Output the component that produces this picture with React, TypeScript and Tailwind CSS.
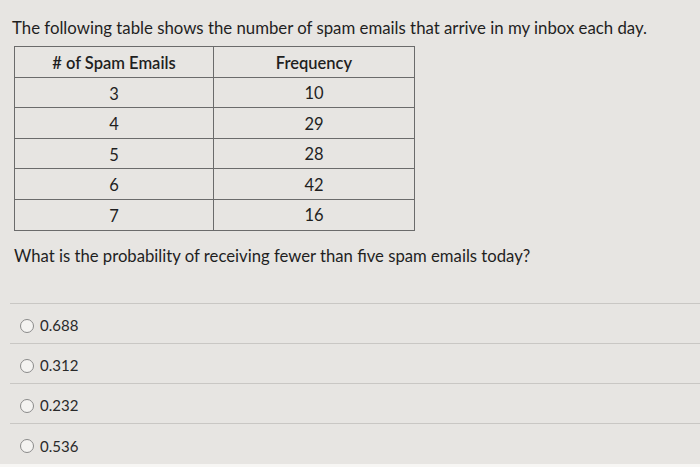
import React from 'react'

const rows = [
  { n: 3, f: 10 },
  { n: 4, f: 29 },
  { n: 5, f: 28 },
  { n: 6, f: 42 },
  { n: 7, f: 16 },
]

const options = ['0.688', '0.312', '0.232', '0.536']

export default function App() {
  return (
    <div
      className="flex h-[467px] w-[700px] flex-col overflow-hidden bg-[#e7e5e2] text-[#1f1f1f]"
      style={{ fontFamily: 'Lato, "Noto Sans", sans-serif' }}
    >
      <p className="pl-[12px] pt-[17px] text-[16.8px] leading-[22px]">
        The following table shows the number of spam emails that arrive in my inbox each day.
      </p>

      <table className="ml-[14px] mt-[7px] w-[401px] border-collapse text-center text-[16.5px]">
        <thead>
          <tr className="h-[30.6px]">
            <th className="w-[199px] border border-[#6b6b6b] pt-[4px] font-semibold">
              # of Spam Emails
            </th>
            <th className="border border-[#6b6b6b] pt-[3px] font-semibold">Frequency</th>
          </tr>
        </thead>
        <tbody>
          {rows.map(r => (
            <tr key={r.n} className="h-[30.6px]">
              <td className="border border-[#6b6b6b] pt-[3px]">{r.n}</td>
              <td className="border border-[#6b6b6b] pt-[2px]">{r.f}</td>
            </tr>
          ))}
        </tbody>
      </table>

      <p className="pl-[14px] pt-[14px] text-[16.7px] leading-[22px]">
        What is the probability of receiving fewer than five spam emails today?
      </p>

      <div className="ml-[10px] mt-[36px] border-t border-[#c9c7c4]">
        {options.map((o, i) => (
          <div
            key={o}
            className={`flex h-[40px] items-center gap-[6px] pl-[10px] pt-[5px] text-[15px] text-[#2a2a2a] ${
              i < options.length - 1 ? 'border-b border-[#c9c7c4]' : ''
            }`}
          >
            <span className="h-[14px] w-[14px] rounded-full border border-[#8a8a8a] bg-[#f4f3f1]" />
            <span>{o}</span>
          </div>
        ))}
      </div>

      <div className="mt-auto h-[3px] bg-[#f7f6f4]" />
    </div>
  )
}
